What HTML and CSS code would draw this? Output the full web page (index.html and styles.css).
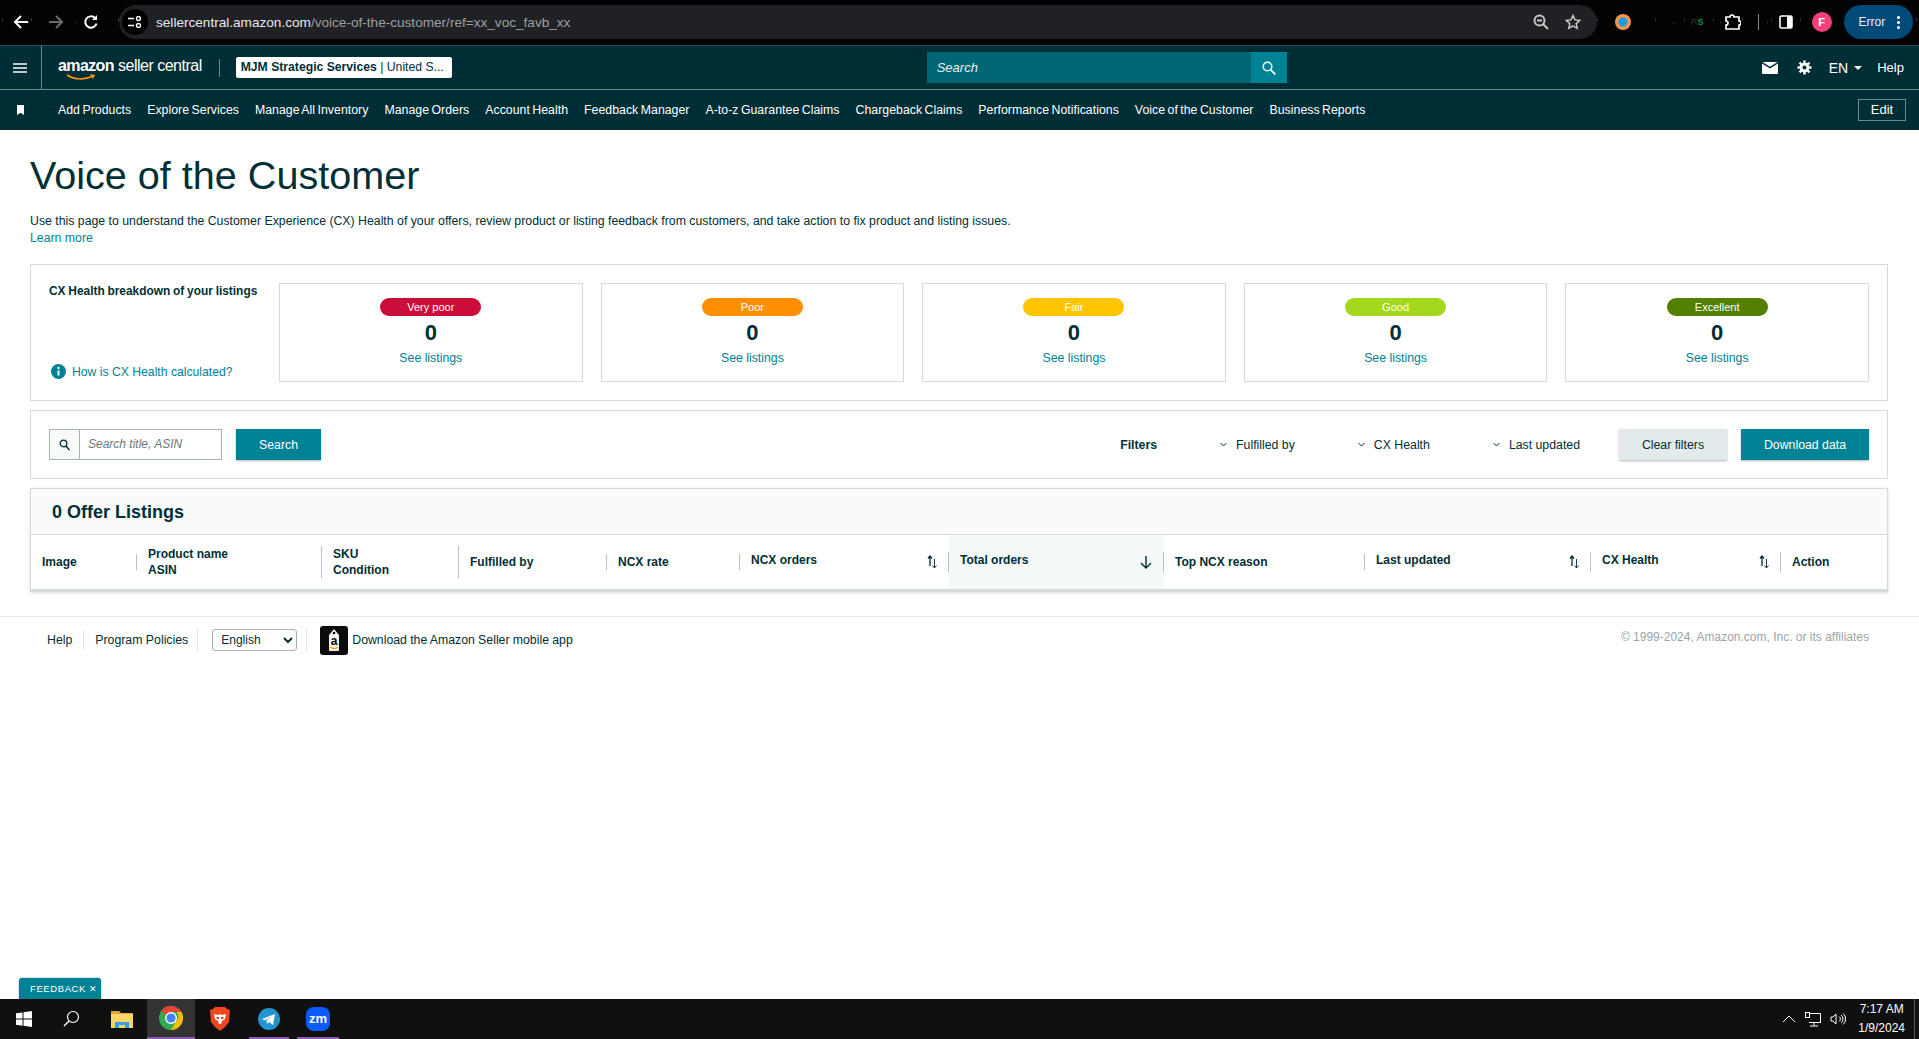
FILE: index.html
```html
<!DOCTYPE html>
<html lang="en">
<head>
    <meta charset="UTF-8">
    <meta name="viewport" content="width=device-width, initial-scale=1.0">
    <title>Voice of the Customer</title>
    <link rel="stylesheet" href="styles.css">
</head>
<body>
    <!-- Browser toolbar -->
    <div class="browser-bar">
        <svg class="tool-icon" width="16" height="16" viewBox="0 0 16 16"><path d="M15 8H2M8 2 2 8l6 6" fill="none" stroke="#fff" stroke-width="2"/></svg>
        <svg class="tool-icon" width="16" height="16" viewBox="0 0 16 16"><path d="M1 8h13M8 2l6 6-6 6" fill="none" stroke="#6b6b6b" stroke-width="2"/></svg>
        <svg class="tool-icon" width="16" height="16" viewBox="0 0 16 16"><path d="M13.500 9.500A5.700 5.700 0 1 1 12 4" fill="none" stroke="#fff" stroke-width="2"/><path d="M14 1v5H9z" fill="#fff"/></svg>
        <div class="address-bar">
            <span class="site-info">
                <svg width="14" height="12" viewBox="0 0 14 12"><path d="M0 2.500h6M0 9.500h6" stroke="#fff" stroke-width="1.600"/><circle cx="10.500" cy="2.500" r="2" fill="none" stroke="#fff" stroke-width="1.400"/><circle cx="10.500" cy="9.500" r="2" fill="none" stroke="#fff" stroke-width="1.400"/></svg>
            </span>
            <span class="url">sellercentral.amazon.com<span class="url-path">/voice-of-the-customer/ref=xx_voc_favb_xx</span></span>
            <svg class="zoom-icon" width="16" height="16" viewBox="0 0 16 16"><circle cx="6.500" cy="6.500" r="5" fill="none" stroke="#c4c7c5" stroke-width="2"/><path d="m10 10 5 5M4 6.500h5" stroke="#c4c7c5" stroke-width="2"/></svg>
            <svg width="16" height="16" viewBox="0 0 16 16"><path d="m8 1.500 2 4.400 4.800.5-3.600 3.200 1 4.700L8 11.900l-4.200 2.400 1-4.700L1.200 6.400 6 5.900z" fill="none" stroke="#c4c7c5" stroke-width="1.500"/></svg>
        </div>
        <div class="extensions">
            <svg width="16" height="16" viewBox="0 0 16 16"><circle cx="8" cy="8" r="8" fill="#f0964e"/><circle cx="8" cy="8" r="4.500" fill="#1b9ce0"/></svg>
            <span class="ext-rs"><b>R</b><i>S</i></span>
            <svg width="16" height="16" viewBox="0 0 16 16"><path d="M1 3h4a2 2 0 0 1 4 0h5v4a2 2 0 0 1 0 4v4H1v-4a2 2 0 0 0 0-4z" fill="none" stroke="#fff" stroke-width="1.700"/></svg>
            <span class="ext-sep"></span>
            <svg width="14" height="14" viewBox="0 0 14 14"><rect x="1" y="1" width="12" height="12" rx="1.500" fill="none" stroke="#fff" stroke-width="1.600"/><rect x="8" y="1" width="5" height="12" fill="#fff"/></svg>
            <span class="avatar">F</span>
            <span class="error-pill">Error <span class="dots"><i></i><i></i><i></i></span></span>
        </div>
    </div>

    <!-- Top bar -->
    <header class="top-bar">
        <div class="menu-cell">
            <svg width="14" height="12" viewBox="0 0 14 12"><path d="M0 2h14M0 6h14M0 10h14" stroke="#fff" stroke-width="1.500"/></svg>
        </div>
        <div class="logo">
            <span class="logo-amazon">amazon</span><span class="logo-rest">seller central</span>
            <svg class="logo-smile" width="30" height="7" viewBox="0 0 30 7"><path d="M1 1c8 5 18 5 26 1" fill="none" stroke="#f90" stroke-width="1.500"/><path d="m24 0 5 1-2 4z" fill="#f90"/></svg>
        </div>
        <span class="logo-sep"></span>
        <div class="account-pill"><b>MJM Strategic Services</b> | United S...</div>
        <div class="top-search">
            <span class="top-search-text">Search</span>
            <span class="top-search-btn">
                <svg width="14" height="14" viewBox="0 0 14 14"><circle cx="5.500" cy="5.500" r="4.300" fill="none" stroke="#fff" stroke-width="1.500"/><path d="m8.800 8.800 4.500 4.500" stroke="#fff" stroke-width="1.800"/></svg>
            </span>
        </div>
        <div class="top-right">
            <svg width="16" height="12" viewBox="0 0 16 12"><path d="M0 1.500V11a1 1 0 0 0 1 1h14a1 1 0 0 0 1-1V1.500L8 6.500z" fill="#fff"/><path d="M.5 0h15L8 4.800z" fill="#fff"/></svg>
            <svg class="gear" width="15" height="15" viewBox="0 0 16 16"><path d="M8 2.800a5.200 5.200 0 1 0 0 10.400A5.200 5.200 0 0 0 8 2.800zm0 3a2.200 2.200 0 1 1 0 4.400 2.200 2.200 0 0 1 0-4.400z" fill="#fff" fill-rule="evenodd"/><path d="M8 .500v3M8 12.500v3M.500 8h3M12.500 8h3M2.700 2.700l2.100 2.100M11.200 11.200l2.100 2.100M2.700 13.300l2.100-2.100M11.200 4.800l2.100-2.100" stroke="#fff" stroke-width="2.600"/></svg>
            <span class="lang">EN</span><span class="lang-caret"></span>
            <span class="top-help">Help</span>
        </div>
    </header>

    <!-- Bookmarks nav -->
    <nav class="nav-bar">
        <svg class="nav-mark" width="7" height="10" viewBox="0 0 7 10"><path d="M0 0h7v10L3.500 7.800 0 10z" fill="#fff"/></svg>
        <a class="nav-link">Add Products</a>
        <a class="nav-link">Explore Services</a>
        <a class="nav-link">Manage All Inventory</a>
        <a class="nav-link">Manage Orders</a>
        <a class="nav-link">Account Health</a>
        <a class="nav-link">Feedback Manager</a>
        <a class="nav-link">A-to-z Guarantee Claims</a>
        <a class="nav-link">Chargeback Claims</a>
        <a class="nav-link">Performance Notifications</a>
        <a class="nav-link">Voice of the Customer</a>
        <a class="nav-link">Business Reports</a>
        <span class="edit-btn">Edit</span>
    </nav>

    <main class="page">
        <h1>Voice of the Customer</h1>
        <p class="intro">Use this page to understand the Customer Experience (CX) Health of your offers, review product or listing feedback from customers, and take action to fix product and listing issues.<br><a href="#">Learn more</a></p>

        <!-- CX Health breakdown -->
        <section class="health-box">
            <div class="health-side">
                <div class="health-title">CX Health breakdown of your listings</div>
                <a class="health-help" href="#">
                    <svg width="15" height="15" viewBox="0 0 15 15"><circle cx="7.500" cy="7.500" r="7.500" fill="#008296"/><path d="M7.500 6.500v5" stroke="#fff" stroke-width="2"/><circle cx="7.500" cy="4" r="1.200" fill="#fff"/></svg>
                    How is CX Health calculated?
                </a>
            </div>
            <div class="health-card">
                <span class="badge very-poor">Very poor</span>
                <div class="health-count">0</div>
                <a href="#">See listings</a>
            </div>
            <div class="health-card">
                <span class="badge poor">Poor</span>
                <div class="health-count">0</div>
                <a href="#">See listings</a>
            </div>
            <div class="health-card">
                <span class="badge fair">Fair</span>
                <div class="health-count">0</div>
                <a href="#">See listings</a>
            </div>
            <div class="health-card">
                <span class="badge good">Good</span>
                <div class="health-count">0</div>
                <a href="#">See listings</a>
            </div>
            <div class="health-card">
                <span class="badge excellent">Excellent</span>
                <div class="health-count">0</div>
                <a href="#">See listings</a>
            </div>
        </section>

        <!-- Search and filters -->
        <section class="filter-box">
            <div class="search-field">
                <span class="search-icon">
                    <svg width="11" height="12" viewBox="0 0 11 12"><circle cx="4.500" cy="4.500" r="3.300" fill="none" stroke="#002f36" stroke-width="1.300"/><path d="m7 7 3.500 4" stroke="#002f36" stroke-width="1.500"/></svg>
                </span>
                <span class="search-hint">Search title, ASIN</span>
            </div>
            <span class="btn btn-primary search-btn">Search</span>
            <b class="filters-label">Filters</b>
            <span class="filter-item"><svg width="7" height="5" viewBox="0 0 7 5"><path d="m.5 1 3 3 3-3" fill="none" stroke="#002f36"/></svg>Fulfilled by</span>
            <span class="filter-item"><svg width="7" height="5" viewBox="0 0 7 5"><path d="m.5 1 3 3 3-3" fill="none" stroke="#002f36"/></svg>CX Health</span>
            <span class="filter-item"><svg width="7" height="5" viewBox="0 0 7 5"><path d="m.5 1 3 3 3-3" fill="none" stroke="#002f36"/></svg>Last updated</span>
            <span class="btn btn-light">Clear filters</span>
            <span class="btn btn-primary download-btn">Download data</span>
        </section>

        <!-- Listings table -->
        <section class="listings">
            <div class="listings-head">0 Offer Listings</div>
            <div class="listings-cols">
                <div class="col"><div class="col-label">Image</div></div>
                <div class="col"><div class="col-label">Product name<br>ASIN</div></div>
                <div class="col"><div class="col-label">SKU<br>Condition</div></div>
                <div class="col"><div class="col-label">Fulfilled by</div></div>
                <div class="col"><div class="col-label">NCX rate</div></div>
                <div class="col"><div class="col-label col-sort"><span class="sort-text">NCX orders</span>
                    <svg width="10" height="14" viewBox="0 0 10 14"><path d="M3 11V1M1 3.500 3 1l2 2.500" fill="none" stroke="#002f36" stroke-width="1.300"/><path d="M7.500 4v9M5.500 10.500l2 2.500 2-2.500" fill="none" stroke="#002f36" stroke-width=".9"/></svg>
                </div></div>
                <div class="col col-active"><div class="col-label col-sort"><span class="sort-text">Total orders</span>
                    <svg width="12" height="14" viewBox="0 0 12 14"><path d="M6 1v12M1 8l5 5 5-5" fill="none" stroke="#002f36" stroke-width="1.400"/></svg>
                </div></div>
                <div class="col"><div class="col-label">Top NCX reason</div></div>
                <div class="col"><div class="col-label col-sort"><span class="sort-text">Last updated</span>
                    <svg width="10" height="14" viewBox="0 0 10 14"><path d="M3 11V1M1 3.500 3 1l2 2.500" fill="none" stroke="#002f36" stroke-width="1.300"/><path d="M7.500 4v9M5.500 10.500l2 2.500 2-2.500" fill="none" stroke="#002f36" stroke-width=".9"/></svg>
                </div></div>
                <div class="col"><div class="col-label col-sort"><span class="sort-text">CX Health</span>
                    <svg width="10" height="14" viewBox="0 0 10 14"><path d="M3 11V1M1 3.500 3 1l2 2.500" fill="none" stroke="#002f36" stroke-width="1.300"/><path d="M7.500 4v9M5.500 10.500l2 2.500 2-2.500" fill="none" stroke="#002f36" stroke-width=".9"/></svg>
                </div></div>
                <div class="col col-last"><div class="col-label">Action</div></div>
            </div>
        </section>
    </main>

    <footer class="footer">
        <a class="foot-link foot-help">Help</a>
        <a class="foot-link foot-policies">Program Policies</a>
        <span class="foot-select-wrap">
            <select class="foot-select"><option>English</option></select>
        </span>
        <svg class="app-icon" width="28" height="29" viewBox="0 0 28 29"><rect width="28" height="29" rx="3" fill="#0b0b0b"/><path d="M9 9l5-6 5 6v15a1 1 0 0 1-1 1h-8a1 1 0 0 1-1-1z" fill="#f3f3f3"/><circle cx="14" cy="7" r="1.300" fill="#0b0b0b"/><text x="14" y="19" text-anchor="middle" class="app-a">a</text><path d="M10 21c3 2 6 2 8 0" fill="none" stroke="#f90" stroke-width="1.200"/></svg>
        <span class="app-text">Download the Amazon Seller mobile app</span>
        <span class="copyright">© 1999-2024, Amazon.com, Inc. or its affiliates</span>
    </footer>

    <div class="feedback-row">
        <span class="feedback-tab">FEEDBACK <span class="feedback-x">✕</span></span>
    </div>

    <!-- Windows taskbar -->
    <div class="taskbar">
        <span class="task-cell task-start">
            <svg width="16" height="16" viewBox="0 0 16 16"><path d="M0 2.300 6.500 1.400v6.200H0zM7.500 1.300 16 0v7.600H7.500zM0 8.500h6.500v6.200L0 13.800zM7.500 8.500H16V16l-8.500-1.200z" fill="#fff"/></svg>
        </span>
        <span class="task-cell task-search">
            <svg width="17" height="17" viewBox="0 0 17 17"><circle cx="10" cy="7" r="5.500" fill="none" stroke="#fff" stroke-width="1.200"/><path d="M6 11 1 16" stroke="#fff" stroke-width="1.500"/></svg>
        </span>
        <span class="task-cell task-files">
            <svg width="22" height="18" viewBox="0 0 22 18"><path d="M0 1h8l2 2h12v3H0z" fill="#e0a526"/><rect y="4" width="22" height="14" fill="#fbd568"/><path d="M4 18v-6h14v6h-4v-3H8v3z" fill="#3d9be0"/></svg>
        </span>
        <span class="task-cell task-chrome">
            <svg width="24" height="24" viewBox="0 0 24 24"><circle cx="12" cy="12" r="12" fill="#34a853"/><path d="M12 0a12 12 0 0 1 10.400 6H12a6 6 0 0 0-5.600 3.800L2.600 4.300A12 12 0 0 1 12 0z" fill="#ea4335"/><path d="M22.400 6A12 12 0 0 1 12 24l5.200-9A6 6 0 0 0 17.500 6z" fill="#fbbc04"/><circle cx="12" cy="12" r="6" fill="#fff"/><circle cx="12" cy="12" r="4.600" fill="#4285f4"/></svg>
        </span>
        <span class="task-cell task-brave">
            <svg width="20" height="24" viewBox="0 0 20 24"><path d="M5 0h10l2 2 3 1-1 12-4 5-5 4-5-4-4-5L0 3l3-1z" fill="#f1461f"/><path d="M4 7l4 1 2-1 2 1 4-1-1 5-3 2-1 3h-2l-1-3-3-2z" fill="#fff"/><path d="M6 10h3v2H7zM11 10h3l-1 2h-2z" fill="#f1461f"/></svg>
        </span>
        <span class="task-cell task-telegram task-open">
            <svg width="22" height="22" viewBox="0 0 22 22"><circle cx="11" cy="11" r="11" fill="#2394cf"/><path d="m4 11 13-5-2 11-4-3-2 2-.5-3.500L14 8l-7 4.500z" fill="#fff"/></svg>
        </span>
        <span class="task-cell task-zoom task-open">
            <svg width="24" height="24" viewBox="0 0 24 24"><rect width="24" height="24" rx="8" fill="#0b5cff"/><text x="12" y="16" text-anchor="middle" class="zm-text">zm</text></svg>
        </span>
        <div class="tray">
            <svg width="14" height="8" viewBox="0 0 14 8"><path d="m1 7 6-6 6 6" fill="none" stroke="#fff"/></svg>
            <svg width="16" height="15" viewBox="0 0 16 15"><path d="M4 1.500h11.500v9h-11.500M9 10.500v3M5 14h8" fill="none" stroke="#fff"/><rect x=".5" y=".5" width="4" height="5" fill="#101010" stroke="#fff"/></svg>
            <svg width="16" height="14" viewBox="0 0 16 14"><path d="M1 5v4h2l3 3V2L3 5zM9 4.500a3 3 0 0 1 0 5M11 3a5 5 0 0 1 0 8M13 1.500a7 7 0 0 1 0 11" fill="none" stroke="#fff"/></svg>
            <div class="clock">7:17 AM<br>1/9/2024</div>
            <span class="show-desktop"></span>
        </div>
    </div>
</body>
</html>
```

FILE: styles.css
```css
* {
    box-sizing: border-box;
}

html, body {
    margin: 0;
    height: 100%;
}

body {
    display: flex;
    flex-direction: column;
    height: 100vh;
    overflow: hidden;
    background: #fff;
    color: #002f36;
    font-family: "Liberation Sans", Arial, sans-serif;
    font-size: 12.300px;
}

a {
    color: #008296;
    text-decoration: none;
}

/* Browser toolbar */
.browser-bar {
    flex: 0 0 45px;
    display: flex;
    align-items: center;
    padding: 0 6px 1px 13px;
    background-color: #030303;
    background-image:
        radial-gradient(#555 0.6px, transparent 1px),
        radial-gradient(#3a2f45 0.7px, transparent 1px);
    background-size: 47px 41px, 29px 43px;
    background-position: 5px 2px, 17px 41px;
}

.tool-icon {
    margin-right: 19px;
}

.address-bar {
    width: 1478px;
    height: 34px;
    margin-left: 1px;
    display: flex;
    align-items: center;
    gap: 16px;
    padding: 0 16px 0 3px;
    border-radius: 17px;
    background: #202124;
    color: #e8eaed;
}

.site-info {
    width: 26px;
    height: 26px;
    margin-right: -8px;
    display: flex;
    align-items: center;
    justify-content: center;
    border-radius: 50%;
    background: #000;
}

.url {
    flex: 1;
    font-size: 13.600px;
}

.url-path {
    color: #9aa0a6;
}

.extensions {
    flex: 1;
    display: flex;
    align-items: center;
    margin-left: 18px;
}

.ext-rs {
    margin-left: 60px;
    margin-right: 21px;
    font-size: 9px;
}

.ext-rs b {
    color: #222;
}

.ext-rs i {
    color: #0c9a4a;
    font-style: normal;
    font-weight: bold;
}

.ext-sep {
    width: 1px;
    height: 16px;
    margin: 0 20px 0 17px;
    background: #8a8a8a;
}

.avatar {
    width: 20px;
    height: 20px;
    margin-left: 19px;
    display: flex;
    align-items: center;
    justify-content: center;
    border-radius: 50%;
    background: #f0407d;
    color: #fff;
    font-size: 11px;
    font-weight: bold;
}

.error-pill {
    width: 69px;
    height: 34px;
    margin-left: 12px;
    display: flex;
    align-items: center;
    justify-content: space-between;
    padding: 0 13px 0 15px;
    border-radius: 17px;
    background: #004a77;
    color: #e8f0fe;
    font-size: 12px;
}

.dots {
    display: flex;
    flex-direction: column;
    gap: 2px;
}

.dots i {
    width: 3px;
    height: 3px;
    border-radius: 50%;
    background: #fff;
}

/* Top bar */
.top-bar {
    flex: 0 0 45px;
    display: flex;
    align-items: center;
    border-top: 1px solid #2e4e53;
    border-bottom: 1px solid #6c8a8e;
    background: #002e36;
    color: #fff;
}

.menu-cell {
    width: 42px;
    height: 100%;
    display: flex;
    align-items: center;
    padding-left: 13px;
    border-right: 1px solid #6c8a8e;
}

.logo {
    position: relative;
    margin-left: 16px;
    margin-top: -3px;
    font-size: 16px;
    white-space: nowrap;
}

.logo-amazon {
    font-weight: bold;
    letter-spacing: -0.6px;
}

.logo-rest {
    margin-left: 4px;
    font-weight: normal;
    letter-spacing: -0.5px;
}

.logo-smile {
    position: absolute;
    left: 8px;
    top: 17px;
}

.logo-sep {
    width: 1px;
    height: 18px;
    margin-left: 17px;
    background: #6c8a8e;
}

.account-pill {
    width: 216px;
    height: 21px;
    margin-left: 16px;
    padding: 0 5px;
    border-radius: 2px;
    background: #fff;
    color: #002f36;
    font-size: 12.200px;
    line-height: 21px;
    white-space: nowrap;
    overflow: hidden;
}

.top-search {
    width: 360px;
    height: 31px;
    margin-left: 475px;
    display: flex;
    align-items: center;
    background: #006574;
}

.top-search-text {
    flex: 1;
    padding-left: 10px;
    color: #e6f1f2;
    font-size: 13px;
    font-style: italic;
}

.top-search-btn {
    width: 36px;
    height: 100%;
    display: flex;
    align-items: center;
    justify-content: center;
    background: #008296;
}

.top-right {
    flex: 1;
    display: flex;
    align-items: center;
    padding-left: 475px;
    font-size: 13px;
}

.gear {
    margin-left: 19px;
}

.lang {
    margin-left: 17px;
    font-size: 14px;
}

.lang-caret {
    margin-left: 6px;
    border-left: 4px solid transparent;
    border-right: 4px solid transparent;
    border-top: 4px solid #fff;
}

.top-help {
    margin-left: 15px;
}

/* Bookmarks nav */
.nav-bar {
    flex: 0 0 40px;
    display: flex;
    align-items: center;
    gap: 16px;
    padding-left: 17px;
    background: #002e36;
}

.nav-mark {
    margin-right: 18px;
}

.nav-link {
    color: #fff;
    font-size: 12.300px;
    letter-spacing: 0.03px;
    word-spacing: -1px;
    white-space: nowrap;
}

.edit-btn {
    width: 48px;
    height: 22px;
    margin-left: auto;
    margin-right: 13px;
    border: 1px solid #6c8a8e;
    color: #fff;
    font-size: 13px;
    line-height: 20px;
    text-align: center;
}

/* Page */
.page {
    padding: 0 31px 0 30px;
}

h1 {
    margin: 23px 0 16px;
    font-size: 39.600px;
    font-weight: normal;
    line-height: 44px;
}

.intro {
    margin: 0 0 17px;
    line-height: 17px;
}

/* CX Health breakdown */
.health-box {
    height: 137px;
    display: flex;
    gap: 18px;
    padding: 18px;
    border: 1px solid #d5dbdb;
}

.health-side {
    width: 212px;
    display: flex;
    flex-direction: column;
    justify-content: space-between;
}

.health-title {
    font-size: 11.900px;
    font-weight: bold;
    word-spacing: -0.5px;
    line-height: 16px;
    white-space: nowrap;
}

.health-help {
    display: flex;
    align-items: center;
    gap: 6px;
    margin-bottom: 3px;
    padding-left: 2px;
    font-size: 12.200px;
}

.health-card {
    flex: 1;
    display: flex;
    flex-direction: column;
    align-items: center;
    padding-top: 14px;
    border: 1px solid #d5dbdb;
}

.badge {
    width: 101px;
    height: 18px;
    border-radius: 9px;
    color: #fff;
    font-size: 11px;
    line-height: 18px;
    text-align: center;
}

.very-poor { background: #cc0c39; }
.poor { background: #ff8f00; }
.fair { background: #ffc400; }
.good { background: #a3d81b; }
.excellent { background: #538000; }

.health-count {
    margin: 4px 0 5px;
    font-size: 22px;
    font-weight: bold;
    line-height: 26px;
}

/* Search and filters */
.filter-box {
    height: 69px;
    margin-top: 9px;
    display: flex;
    align-items: center;
    padding: 0 18px;
    border: 1px solid #d5dbdb;
}

.search-field {
    width: 173px;
    height: 31px;
    display: flex;
    border: 1px solid #a6b2b2;
}

.search-icon {
    width: 30px;
    display: flex;
    align-items: center;
    justify-content: center;
    border-right: 1px solid #a6b2b2;
    background: #f9fafa;
}

.search-hint {
    padding-left: 8px;
    color: #6c7778;
    font-size: 12px;
    font-style: italic;
    line-height: 29px;
}

.btn {
    height: 31px;
    display: flex;
    align-items: center;
    justify-content: center;
    box-shadow: 0 1px 2px rgba(0, 0, 0, 0.3);
}

.btn-primary {
    background: #008296;
    color: #fff;
}

.btn-light {
    width: 108px;
    margin-left: 39px;
    background: #e3eaeb;
}

.search-btn {
    width: 85px;
    margin-left: 14px;
}

.download-btn {
    width: 128px;
    margin-left: 14px;
}

.filters-label {
    margin-left: auto;
}

.filter-item {
    display: flex;
    align-items: center;
    gap: 9px;
    margin-left: 63px;
}

/* Listings table */
.listings {
    margin-top: 9px;
    border: 1px solid #d5dbdb;
    border-bottom: 3px solid #d5dbdb;
    box-shadow: 0 1px 3px rgba(0, 0, 0, 0.15);
}

.listings-head {
    height: 46px;
    padding-left: 21px;
    border-bottom: 1px solid #d5dbdb;
    background: #f9fafa;
    font-size: 18px;
    font-weight: bold;
    line-height: 46px;
}

.listings-cols {
    height: 54px;
    display: grid;
    grid-template-columns: 106px 185px 137px 148px 133px 209px 215px 201px 226px 190px 1fr;
    align-items: center;
    font-size: 12px;
    font-weight: bold;
}

.col {
    height: 100%;
    display: flex;
    align-items: center;
}

.col-label {
    flex: 1;
    padding: 0 12px 0 11px;
    border-right: 1px solid #b8c2c2;
    line-height: 16px;
}

.col-sort {
    display: flex;
    align-items: center;
    justify-content: space-between;
    height: 20px;
    padding-right: 11px;
}

.sort-text {
    margin-bottom: 4px;
}

.col-active {
    background: #f4f8f8;
}

.col-last .col-label {
    border-right: 0;
}

/* Footer */
.footer {
    height: 47px;
    margin-top: 24px;
    display: flex;
    align-items: center;
    padding: 0 50px 0 47px;
    border-top: 1px solid #e7e9e9;
}

.foot-link {
    color: #002f36;
    line-height: 22px;
}

.foot-help {
    padding-right: 11px;
    border-right: 1px solid #e3e6e6;
}

.foot-policies {
    padding: 0 9px 0 11px;
    border-right: 1px solid #e3e6e6;
}

.foot-select-wrap {
    padding: 0 9px 0 14px;
    border-right: 1px solid #e3e6e6;
}

.foot-select {
    display: block;
    width: 85px;
    height: 22px;
    padding-left: 4px;
    border: 1px solid #a6b2b2;
    border-radius: 3px;
    background: #fff;
    color: #002f36;
    font-family: "Liberation Sans", Arial, sans-serif;
    font-size: 12px;
}

.app-icon {
    margin-left: 13px;
}

.app-a {
    fill: #0b0b0b;
    font-family: "Liberation Sans", Arial, sans-serif;
    font-size: 12px;
    font-weight: bold;
}

.app-text {
    margin-left: 4px;
    word-spacing: -0.2px;
}

.copyright {
    margin-left: auto;
    margin-top: -6px;
    color: #9aa5a6;
    font-size: 12px;
}

/* Feedback tab */
.feedback-row {
    margin-top: auto;
    padding-left: 18px;
}

.feedback-tab {
    display: block;
    width: 84px;
    height: 22px;
    padding-left: 11px;
    border: 1px solid #d5e4e6;
    border-bottom: 0;
    border-radius: 4px 4px 0 0;
    background: #008296;
    color: #fff;
    font-size: 9.500px;
    letter-spacing: 0.6px;
    line-height: 21px;
    white-space: nowrap;
}

.feedback-x {
    font-size: 9px;
}

/* Taskbar */
.taskbar {
    flex: 0 0 40px;
    display: flex;
    align-items: center;
    background: #101010;
    color: #fff;
}

.task-cell {
    height: 100%;
    flex: none;
    display: flex;
    align-items: center;
    justify-content: center;
    padding-bottom: 1px;
}

.task-start { width: 47px; }
.task-search { width: 49px; }
.task-files { width: 51px; }
.task-brave { width: 50px; }
.task-telegram { width: 48px; }
.task-zoom { width: 50px; }

.task-chrome {
    width: 48px;
    background: #333;
    border-bottom: 2px solid #8e5bb0;
}

.task-open {
    position: relative;
}

.task-open::after {
    content: "";
    position: absolute;
    left: 4px;
    right: 4px;
    bottom: 0;
    height: 2px;
    background: #8e5bb0;
}

.zm-text {
    fill: #fff;
    font-family: "Liberation Sans", Arial, sans-serif;
    font-size: 13px;
    font-weight: bold;
}

.tray {
    flex: 1;
    display: flex;
    align-items: center;
    justify-content: flex-end;
    gap: 9px;
    padding-right: 4px;
}

.clock {
    margin-left: 3px;
    font-size: 12px;
    line-height: 19px;
    text-align: center;
}

.show-desktop {
    width: 1px;
    height: 40px;
    background: #555;
}
```
